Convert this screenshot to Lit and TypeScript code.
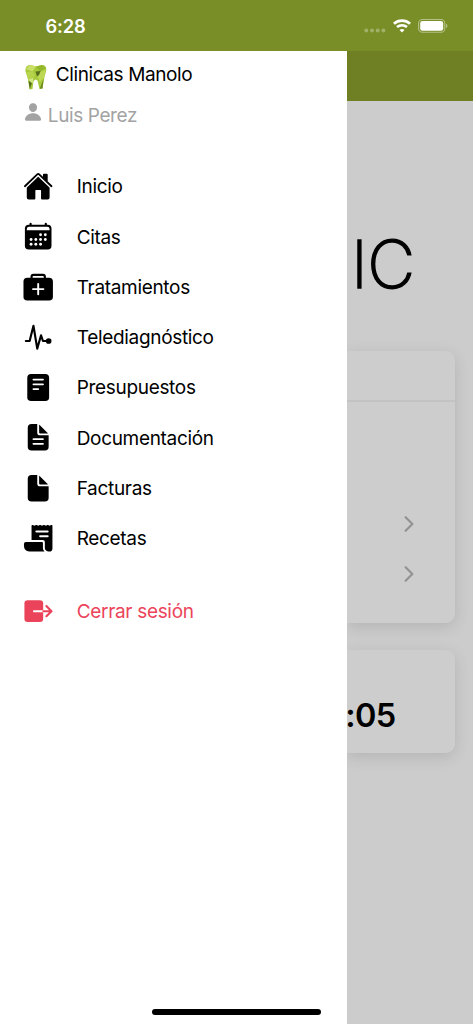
import { LitElement, html, css, svg, nothing } from "lit";
import { customElement, property } from "lit/decorators.js";

const glyphs: Record<string, unknown> = {
  home: svg`<path d="M261.56 101.28a8 8 0 00-11.06 0L66.4 277.15a8 8 0 00-2.47 5.79L63.9 448a32 32 0 0032 32H192a16 16 0 0016-16V328a8 8 0 018-8h80a8 8 0 018 8v136a16 16 0 0016 16h96.06a32 32 0 0032-32V282.94a8 8 0 00-2.47-5.79z"/><path d="M490.91 244.15l-74.8-71.56V64a16 16 0 00-16-16h-48a16 16 0 00-16 16v32l-57.92-55.38C272.77 35.14 264.71 32 256 32c-8.68 0-16.72 3.14-22.14 8.63l-212.7 203.5c-6.22 6-7 15.87-1.34 22.37A16 16 0 0043 267.56L250.5 69.28a8 8 0 0111.06 0l207.52 198.28a16 16 0 0022.59-.44c6.14-6.36 5.63-16.86-.76-22.97z"/>`,
  calendar: svg`<rect x="32" y="64" width="448" height="416" rx="64"/><path class="line" d="M128 48v32M384 48v32"/><path class="paper" d="M64 156v-20a40 40 0 0140-40h304a40 40 0 0140 40v20z"/><g class="paper"><circle cx="296" cy="232" r="24"/><circle cx="376" cy="232" r="24"/><circle cx="136" cy="312" r="24"/><circle cx="216" cy="312" r="24"/><circle cx="296" cy="312" r="24"/><circle cx="376" cy="312" r="24"/><circle cx="136" cy="392" r="24"/><circle cx="216" cy="392" r="24"/><circle cx="296" cy="392" r="24"/></g>`,
  medkit: svg`<rect x="8" y="96" width="496" height="384" rx="64"/><path class="line" d="M144 100V80a32 32 0 0132-32h160a32 32 0 0132 32v20"/><path class="line light" d="M256 200v176M344 288H168"/>`,
  pulse: svg`<path class="line" d="M48 320h64l64-256 64 384 64-224 32 96h64"/><circle cx="432" cy="320" r="48"/>`,
  reader: svg`<rect x="72" y="32" width="368" height="456" rx="64"/><path class="line light" d="M176 128h160M176 208h160M176 288h80"/>`,
  documentText: svg`<path d="M428 224H288a48 48 0 01-48-48V36a4 4 0 00-4-4h-92a64 64 0 00-64 64v320a64 64 0 0064 64h224a64 64 0 0064-64V228a4 4 0 00-4-4zm-92 160H176a16 16 0 010-32h160a16 16 0 010 32zm0-80H176a16 16 0 010-32h160a16 16 0 010 32z"/><path d="M419.22 188.59L275.41 44.78a2 2 0 00-3.41 1.41V176a16 16 0 0016 16h129.81a2 2 0 001.41-3.41z"/>`,
  document: svg`<path d="M428 224H288a48 48 0 01-48-48V36a4 4 0 00-4-4h-92a64 64 0 00-64 64v320a64 64 0 0064 64h224a64 64 0 0064-64V228a4 4 0 00-4-4z"/><path d="M419.22 188.59L275.41 44.78a2 2 0 00-3.41 1.41V176a16 16 0 0016 16h129.81a2 2 0 001.41-3.41z"/>`,
  receipt: svg`<path d="M483.82 32.45a16.28 16.28 0 00-11.23 1.37L448 46.1l-24.8-12.4a16 16 0 00-14.31 0l-25.11 12.41L358.8 33.7a16 16 0 00-14.36 0L320 46.07l-24.45-12.34a16 16 0 00-14.35-.06L256 46.12l-24.8-12.43a16.05 16.05 0 00-14.33 0L192 46.1l-24.84-12.41a16 16 0 00-19.36 3.94 16.25 16.25 0 00-3.8 10.65V288l.05.05H336a32 32 0 0132 32V424c0 30.93 33.07 56 64 56h12a52 52 0 0052-52V48a16 16 0 00-12.18-15.55zM416 240H288.5c-8.64 0-16.1-6.64-16.48-15.28A16 16 0 01288 208h127.5c8.64 0 16.1 6.64 16.48 15.28A16 16 0 01416 240zm0-80H224.5c-8.64 0-16.1-6.64-16.48-15.28A16 16 0 01224 128h191.5c8.64 0 16.1 6.64 16.48 15.28A16 16 0 01416 160z"/><path d="M336 424v-88a16 16 0 00-16-16H48a32.1 32.1 0 00-32 32.05c0 50.55 5.78 71.57 14.46 87.57C45.19 466.79 71.86 480 112 480h245.68a4 4 0 002.85-6.81C351.07 463.7 336 451 336 424z"/>`,
  exit: svg`<rect x="24" y="72" width="316" height="368" rx="56"/><path class="line light" d="M184 256h156"/><path class="line" d="M344 256h134M394 170l86 86-86 86"/>`,
  person: svg`<path d="M332.64 64.58C313.18 43.57 286 32 256 32c-30.16 0-57.43 11.5-76.8 32.38-19.58 21.11-29.12 49.8-26.88 80.78C156.76 206.28 203.27 256 256 256s99.16-49.71 103.67-110.82c2.27-30.7-7.33-59.33-27.03-80.6zM432 480H80a31 31 0 01-24.2-11.13c-6.5-7.77-9.12-18.38-7.18-29.11C57.06 392.94 83.4 353.61 124.8 326c36.78-24.51 83.37-38 131.2-38s94.42 13.5 131.2 38c41.4 27.6 67.74 66.93 76.18 113.75 1.94 10.73-.68 21.34-7.18 29.11A31 31 0 01432 480z"/>`,
  chevron: svg`<path class="line bold" d="M184 112l144 144-144 144"/>`,
};

@customElement("app-icon")
class AppIcon extends LitElement {
  @property() name = "";
  static styles = css`
    :host { display: block; flex: none; }
    svg { display: block; width: 100%; height: 100%; fill: currentColor; overflow: visible; }
    .line { fill: none; stroke: currentColor; stroke-width: 36; stroke-linecap: round; stroke-linejoin: round; }
    .bold { stroke-width: 46; }
    .light { stroke: #fff; stroke-width: 32; }
    .paper { fill: #fff; }
  `;
  render() {
    return html`<svg viewBox="0 0 512 512">${glyphs[this.name] ?? nothing}</svg>`;
  }
}

const entries = [
  { icon: "home", label: "Inicio" },
  { icon: "calendar", label: "Citas" },
  { icon: "medkit", label: "Tratamientos" },
  { icon: "pulse", label: "Telediagnóstico" },
  { icon: "reader", label: "Presupuestos" },
  { icon: "documentText", label: "Documentación" },
  { icon: "document", label: "Facturas" },
  { icon: "receipt", label: "Recetas" },
];

@customElement("app-root")
class AppRoot extends LitElement {
  static styles = css`
    :host {
      display: flex; flex-direction: column; position: relative;
      height: 1024px; overflow: hidden; background: #fff; color: #000;
      font-family: Inter, "Liberation Sans", sans-serif; font-size: 19px;
    }
    * { box-sizing: border-box; }
    .status {
      flex: none; height: 50.5px; padding: 0 25px 0 45.5px; background: #798e27; color: #fff;
      display: flex; align-items: center; justify-content: space-between;
    }
    .clock { font-size: 18.3px; font-weight: 600; letter-spacing: -0.1px; padding-top: 2px; }
    .signals { display: block; width: 84px; height: 16px; margin-top: 2px; }
    .body { flex: 1; min-height: 0; display: grid; grid-template-columns: 347px 1fr; }
    .drawer { background: #fff; padding: 4px 24px 0 23.3px; }
    .brand { display: flex; align-items: center; height: 40px; gap: 7.5px; letter-spacing: -0.4px; }
    .tooth { width: 25px; height: 26px; display: block; margin-top: 4px; }
    .user { display: flex; align-items: center; height: 40px; gap: 5px; color: #a3a3a3; letter-spacing: -0.4px; padding-top: 1px; }
    .user app-icon { width: 20px; height: 20px; margin: -6px 0 0 -0.5px; }
    .menu { list-style: none; margin: 26.8px 0 0; padding: 0; }
    .item { display: flex; align-items: center; gap: 23px; height: 50.25px; letter-spacing: -0.32px; }
    .item span { padding-top: 1px; }
    .item app-icon { width: 30.4px; height: 30.4px; }
    .exit { margin-top: 22.5px; color: #eb445a; }
    .page { background: #ccc; overflow: hidden; }
    .bar { height: 50px; background: #6e8023; }
    .logo {
      height: 250px; padding: 127px 0 0 4px; font-size: 66px; line-height: 72px; font-weight: 200;
      letter-spacing: -0.6px; white-space: nowrap;
      -webkit-text-stroke: 1.3px #000; stroke-linejoin: round;
    }
    .card {
      margin-right: 18.5px; background: #cdcdcd; border-radius: 0 9px 9px 0;
      box-shadow: 0 4px 16px rgba(0, 0, 0, 0.12);
    }
    .tasks { height: 272.5px; }
    .head { height: 51.5px; border-bottom: 2px solid #c3c3c3; }
    .rows { padding-top: 97.2px; color: #929292; }
    .row { height: 50.2px; display: flex; align-items: center; justify-content: flex-end; padding-right: 34px; }
    .row app-icon { width: 24px; height: 24px; }
    .timer {
      margin-top: 27px; height: 103px; padding: 46px 0 0 0;
      font-size: 32.5px; line-height: 40px; font-weight: 600; letter-spacing: -0.6px; text-indent: -1.8px;
    }
    .homebar {
      position: absolute; left: 152px; bottom: 9px; width: 169px; height: 6px;
      border-radius: 3px; background: #000;
    }
  `;

  render() {
    return html`
      <header class="status">
        <span class="clock">6:28</span>
        <svg class="signals" viewBox="0 0 84 16">
          <g fill="#fff" fill-opacity=".3">
            <circle cx="2.3" cy="12.6" r="2"/><circle cx="8" cy="12.6" r="2"/><circle cx="13.700" cy="12.6" r="2"/><circle cx="19.400" cy="12.6" r="2"/>
          </g>
          <g fill="none" stroke="#fff" stroke-width="2.6">
            <path d="M29.9 5.8a12 12 0 0116.2 0"/><path d="M33 9.1a7.6 7.6 0 0110 0"/>
          </g>
          <path fill="#fff" d="M38 14.6l-2.5-2.6a3.8 3.8 0 015 0z"/>
          <rect x="54.6" y="1.5" width="26.2" height="12.8" rx="3.8" fill="none" stroke="#fff" stroke-opacity=".45" stroke-width="1.1"/>
          <rect x="56.2" y="3.1" width="23" height="9.6" rx="2.3" fill="#fff"/>
          <path d="M82.1 5.8v4.3a2.4 2.4 0 000-4.3z" fill="#fff" fill-opacity=".5"/>
        </svg>
      </header>
      <div class="body">
        <aside class="drawer">
          <div class="brand">
            <svg class="tooth" viewBox="0 0 25 26">
              <path fill="#a5c93a" d="M2.500 5C3 2 5 1 7.500 1L13 2.500 19 1C22 1 23.500 3 23.300 6 23 9 21.500 11 21.300 14L19.500 24.500 16.500 25 14.500 16.500 12.500 15.500 10.500 17 9.500 25 6.500 25.500 4.800 14C4.500 11 2 9 2.500 5z"/>
              <path fill="#c9df68" d="M2.600 5L7.500 1 13 2.600 9.500 7.500z"/>
              <path fill="#b6d44c" d="M3 8l6.500-.5 3 4-7.500 4z"/>
              <path fill="#93b62d" d="M13 2.600L19 1l4 3-6 3.500z"/>
              <path fill="#bcd855" d="M14.500 12.500L17.500 8l5-2.500-1.500 8-4 4.500z"/>
              <path fill="#566f1c" d="M12.500 7.500l5-.5-1.500 4-2 1.500zM5.500 17l3.500 2-2.200 6z"/>
              <path fill="#6c8a22" d="M20.500 15l-1 9.500-2.800.3z"/>
              <path fill="#d3e587" d="M5.500 15.500l5-2-1 6z"/>
            </svg>
            <span>Clinicas Manolo</span>
          </div>
          <div class="user"><app-icon name="person"></app-icon><span>Luis Perez</span></div>
          <ul class="menu">
            ${entries.map((e) => html`<li class="item"><app-icon name=${e.icon}></app-icon><span>${e.label}</span></li>`)}
            <li class="item exit"><app-icon name="exit"></app-icon><span>Cerrar sesión</span></li>
          </ul>
        </aside>
        <main class="page">
          <div class="bar"></div>
          <div class="logo">IC</div>
          <section class="card tasks">
            <div class="head"></div>
            <div class="rows">
              <div class="row"><app-icon name="chevron"></app-icon></div>
              <div class="row"><app-icon name="chevron"></app-icon></div>
            </div>
          </section>
          <section class="card timer">:05</section>
        </main>
      </div>
      <div class="homebar"></div>
    `;
  }
}
